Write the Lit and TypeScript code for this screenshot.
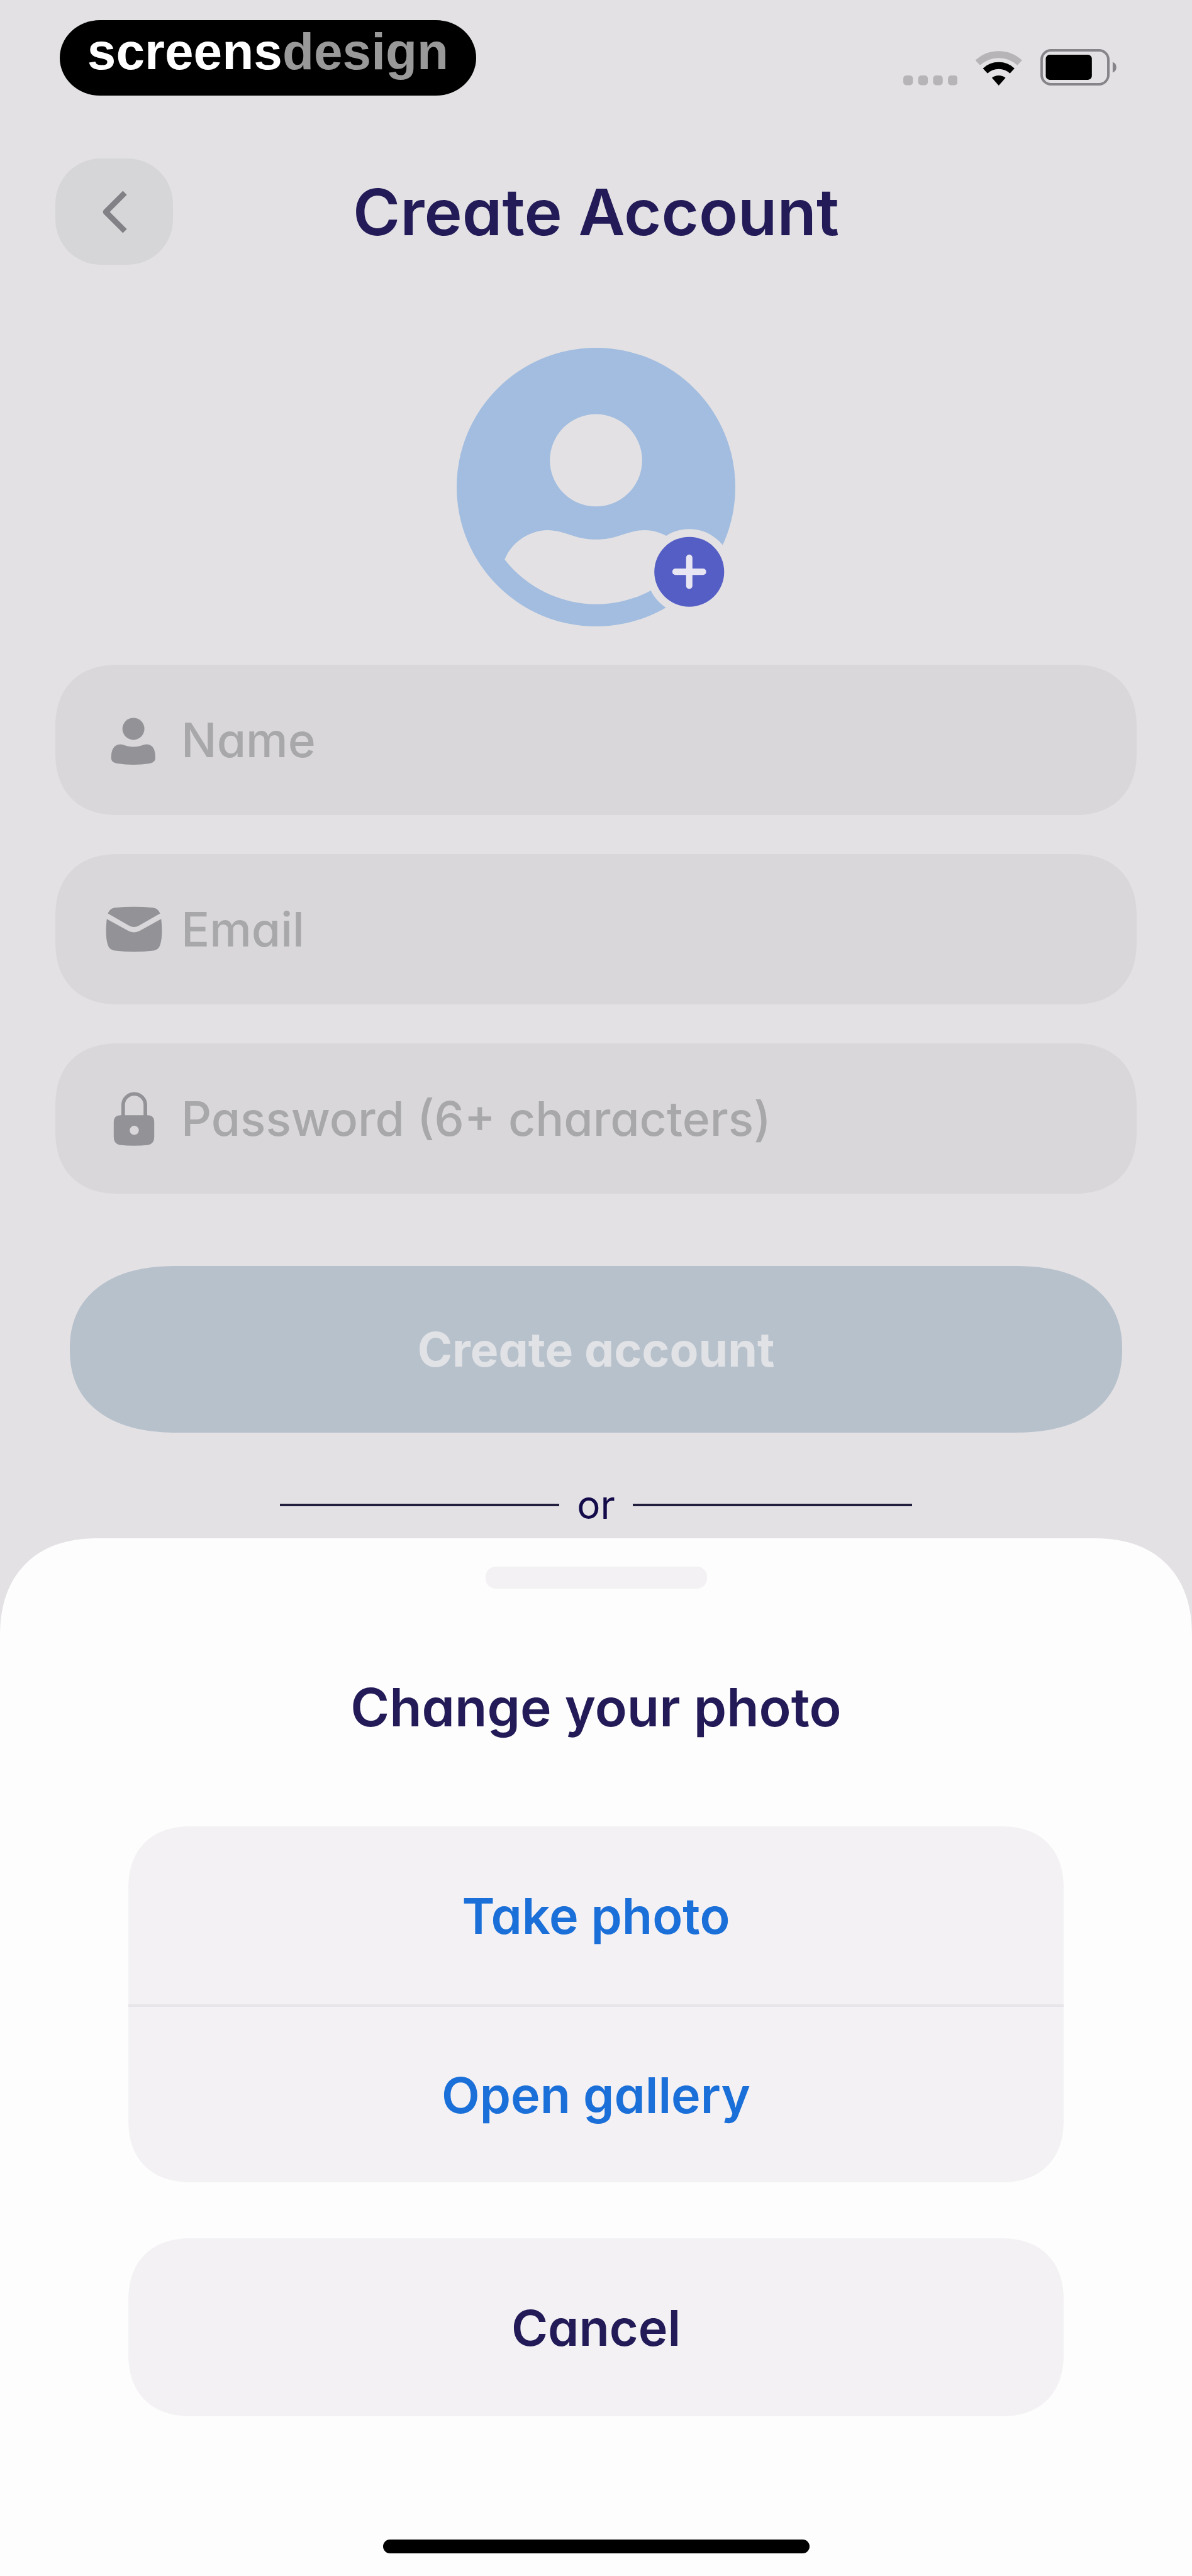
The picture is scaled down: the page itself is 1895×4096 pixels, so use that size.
import { LitElement, html, css, svg } from "lit";
import { customElement } from "lit/decorators.js";

const personIcon = svg`
  <circle cx="50" cy="30.5" r="19.8" />
  <path d="M10 84C9.500 70 14 59 26 58.500C33 58.500 37 63 50 63C63 63 67 58.500 74 58.500C86 59 90 70 89.500 84C89 90 84 92 79 93C60 96 40 96 21 93C15 92 10.500 90 10 84Z" />
`;

const mailIcon = svg`
  <path d="M4 22C7 15 11 12 18 11.500C40 9.500 62 9.500 84 11.500C91 12 95 15 98 22L60 44Q51 49 42 44Z" />
  <path d="M2 32L40 53Q51 59 62 53L100 32C102 50 102 68 98 79C96 85 92 88 86 89C63 92 40 92 17 89C10 88 6 85 4 79C0 68 0 50 2 32Z" />
`;

const lockIcon = svg`
  <path d="M31.500 48V26A20 20 0 0 1 71.500 26V48" fill="none" stroke="currentColor" stroke-width="6.500" />
  <path fill-rule="evenodd" d="M27 44.500H76Q87.500 44.500 87.500 57V84Q87.500 96 77 98Q51 101 25 98Q14.500 96 14.500 84V57Q14.500 44.500 27 44.500ZM51.500 63.500A8.200 8.200 0 1 0 51.500 79.900A8.200 8.200 0 1 0 51.500 63.500Z" />
`;

const fields = [
  { id: "name", type: "text", placeholder: "Name", icon: personIcon },
  { id: "email", type: "email", placeholder: "Email", icon: mailIcon },
  { id: "password", type: "password", placeholder: "Password (6+ characters)", icon: lockIcon },
];

@customElement("app-root")
export class AppRoot extends LitElement {
  static styles = css`
    :host {
      display: flex;
      flex-direction: column;
      min-height: 100vh;
      background: #e3e1e4;
      color: #221b57;
      font-family: Inter, "Open Sans", sans-serif;
      font-feature-settings: "cv11";
    }
    * {
      box-sizing: border-box;
    }
    button,
    input {
      font: inherit;
      font-feature-settings: inherit;
      border: 0;
      margin: 0;
      padding: 0;
      background: none;
      color: inherit;
    }
    svg {
      display: block;
    }
    h1,
    h2 {
      margin: 0;
    }
    .status {
      display: flex;
      justify-content: space-between;
      align-items: flex-end;
      padding: 32px 120px 0 95px;
    }
    .brand {
      display: flex;
      justify-content: center;
      width: 662px;
      height: 120px;
      border-radius: 64px / 60px;
      background: #000;
      color: #fff;
      font: bold 82px / 100px "Liberation Sans", sans-serif;
    }
    .brand-dim {
      color: #999;
    }
    .indicators {
      display: flex;
      align-items: flex-end;
      gap: 29px;
      padding-bottom: 16px;
    }
    .header {
      display: grid;
      grid-template-columns: 187px 1fr 187px;
      align-items: center;
      padding: 100px 88px 0;
    }
    .back {
      display: grid;
      place-items: center;
      height: 169px;
      border-radius: 72px;
      background: #d6d5d8;
      color: #828286;
    }
    .title {
      text-align: center;
      font-size: 102px;
      line-height: 120px;
      font-weight: 600;
    }
    .avatar {
      align-self: center;
      margin-top: 132px;
    }
    .form {
      display: flex;
      flex-direction: column;
      gap: 62px;
      padding: 61px 88px 0;
    }
    .field {
      display: flex;
      align-items: center;
      gap: 30px;
      height: 239px;
      padding: 0 80px;
      border-radius: 100px;
      background: #d9d7da;
      color: #939296;
    }
    .field-icon {
      flex: none;
      fill: currentColor;
    }
    .input {
      flex: 1;
      min-width: 0;
      height: 96px;
      outline: 0;
      font-size: 75px;
      font-weight: 500;
      color: #221b57;
    }
    .input::placeholder {
      color: #a8a7aa;
      opacity: 1;
    }
    .submit {
      height: 265px;
      margin: 53px 23px 0;
      border-radius: 170px / 132px;
      background: #b7c1cc;
      color: #e1e2e5;
      font-size: 75px;
      font-weight: 700;
    }
    .or {
      display: flex;
      align-items: center;
      align-self: center;
      gap: 28px;
      width: 53%;
      height: 76px;
      margin-top: 77px;
      color: #130a4a;
      font-size: 62px;
      line-height: 76px;
    }
    .rule {
      flex: 1;
      height: 4px;
      background: #23203f;
    }
    .sheet {
      flex: 1;
      display: flex;
      flex-direction: column;
      margin-top: 15px;
      padding: 45px 204px 36px;
      border-radius: 156px 156px 0 0;
      background: #fdfdfd;
    }
    .handle {
      align-self: center;
      width: 352px;
      height: 35px;
      border-radius: 16px;
      background: #f3f1f3;
    }
    .sheet-title {
      margin: 141px 0;
      text-align: center;
      font-size: 84px;
      line-height: 96px;
      font-weight: 600;
    }
    .group {
      display: flex;
      flex-direction: column;
      border-radius: 100px;
      background: #f3f1f4;
      overflow: hidden;
    }
    .action {
      height: 283px;
      font-size: 79px;
      font-weight: 600;
    }
    .link {
      color: #1a6fd8;
    }
    .link + .link {
      border-top: 4px solid #e7e5e9;
    }
    .cancel {
      margin-top: 89px;
      border-radius: 100px;
      background: #f3f1f4;
    }
    .submit,
    .field,
    .sheet,
    .group,
    .cancel {
      corner-shape: superellipse(1.2);
    }
    .home {
      align-self: center;
      width: 678px;
      height: 22px;
      margin-top: auto;
      border-radius: 11px;
      background: #000;
    }
  `;

  render() {
    return html`
      <div class="status">
        <div class="brand"><span>screens</span><span class="brand-dim">design</span></div>
        <div class="indicators">
          <svg width="86" height="16" viewBox="0 0 98 18" fill="#b6b4b7" aria-hidden="true">
            ${[0, 27, 54, 81].map((x) => svg`<rect x=${x} y="0" width="17.500" height="17.500" rx="5.500" />`)}
          </svg>
          <svg width="74" height="56" viewBox="0 0 84 64" fill="none" stroke-width="12.500" aria-hidden="true">
            <path d="M3.500 22.700A56 56 0 0 1 79.900 22.700" stroke="#b6b4b7" />
            <path d="M17.200 37.400A36 36 0 0 1 66.200 37.400" stroke="#000" />
            <path d="M41.700 64L29.300 50A20 20 0 0 1 54.100 50Z" fill="#000" />
          </svg>
          <svg width="121" height="58" viewBox="0 0 138 66" aria-hidden="true">
            <rect x="2.200" y="2.200" width="121" height="61.600" rx="17" fill="none" stroke="#868489" stroke-width="4.500" />
            <rect x="9.700" y="10.300" width="83.600" height="45.400" rx="7" />
            <path d="M131 23.300Q137.700 26 137.700 33T131 42.700Z" fill="#868489" />
          </svg>
        </div>
      </div>

      <header class="header">
        <button class="back" aria-label="Back">
          <svg width="42" height="68" viewBox="0 0 47 76" fill="none" stroke="currentColor" stroke-width="10" stroke-linejoin="round" aria-hidden="true">
            <path d="M42 4L8 38L42 72" />
          </svg>
        </button>
        <h1 class="title">Create Account</h1>
      </header>

      <button class="avatar" aria-label="Add photo">
        <svg width="443" height="443" viewBox="0 0 505 505" aria-hidden="true">
          <circle cx="252.500" cy="252.500" r="252.500" fill="#a2bddf" />
          <g fill="#e3e1e4">
            <circle cx="252.500" cy="204" r="83.600" />
            <path d="M87 384C100 350 135 330.500 164.500 330.500C196 330.500 213 347.500 253 347.500C293 347.500 310 330.500 341 330.500C371 330.500 406 350 419 384A211 211 0 0 1 87 384Z" />
            <circle cx="421.500" cy="406" r="77.500" />
          </g>
          <circle cx="421.500" cy="406" r="63.300" fill="#545ec4" />
          <path d="M396.500 406H446.500M421.500 380.500V431.500" stroke="#e8e6f2" stroke-width="11.500" stroke-linecap="round" />
        </svg>
      </button>

      <form class="form">
        ${fields.map(
          (f) => html`
            <label class="field" for=${f.id}>
              <svg class="field-icon" width="90" height="90" viewBox="0 0 102 102" aria-hidden="true">${f.icon}</svg>
              <input class="input" id=${f.id} type=${f.type} placeholder=${f.placeholder} aria-label=${f.placeholder} />
            </label>
          `,
        )}
        <button class="submit" type="button">Create account</button>
      </form>

      <div class="or"><span class="rule"></span><span>or</span><span class="rule"></span></div>

      <section class="sheet" role="dialog" aria-labelledby="sheet-title">
        <div class="handle"></div>
        <h2 class="sheet-title" id="sheet-title">Change your photo</h2>
        <div class="group">
          <button class="action link">Take photo</button>
          <button class="action link">Open gallery</button>
        </div>
        <button class="action cancel">Cancel</button>
        <div class="home"></div>
      </section>
    `;
  }
}
